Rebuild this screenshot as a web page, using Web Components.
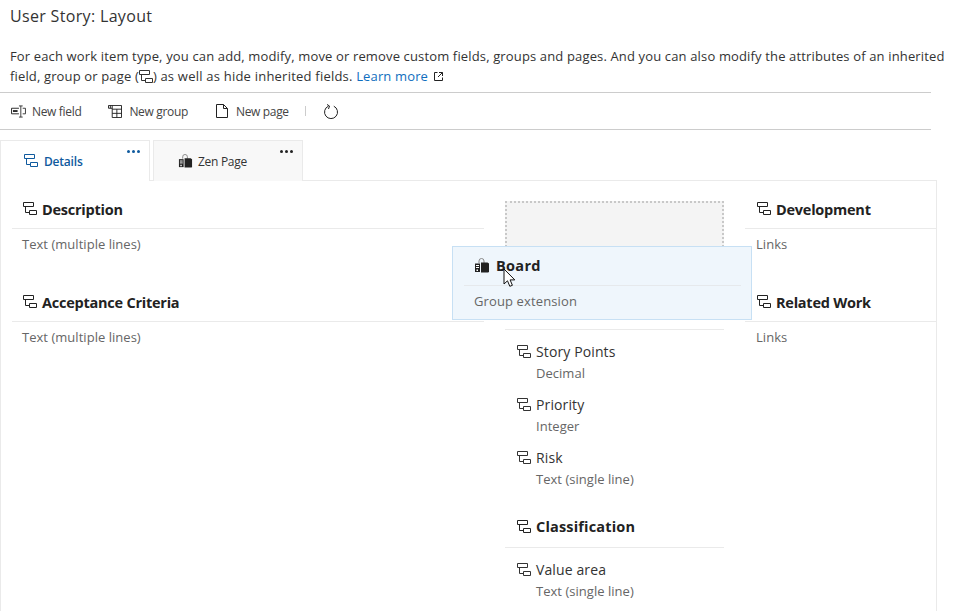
<!DOCTYPE html>
<html><head><meta charset="utf-8">
<style>
html,body{margin:0;padding:0;background:#fff;overflow:hidden;height:611px;font-family:"Open Sans","Noto Sans","Liberation Sans",sans-serif;color:#333}
</style></head><body>
<layout-page></layout-page>
<script>
const ICONS={
 group:'<svg viewBox="0 0 14 14" fill="none" stroke="currentColor" stroke-width="1"><path d="M.5 .5h10v4H.5zM6.500 8.500h7v4h-7zM2.500 4.500v6h4"/></svg>',
 bag:'<svg viewBox="0 0 16 16"><path d="M5 5V3a2.400 2.400 0 0 1 5 0v2" fill="none" stroke="#888" stroke-width="1"/><path d="M1 5.500h5V14H1z" fill="#222"/><path d="M7 4.500h6.500l1.500 1V14l-1 .5H7z" fill="#222"/><path d="M2 7.500h3M2 9.500h3" stroke="#fff" stroke-width="1"/><path d="M2.500 11.500H4v1.500H2.500z" fill="#fff"/></svg>',
 field:'<svg viewBox="0 0 16 14" fill="none" stroke="#222" stroke-width="1"><path d="M8.500 3.500H.5v6h8"/><path d="M2 5.500h5v2H2z" fill="#222" stroke="none"/><path d="M10.500 1v12M8.500 1h4M8.500 13h4M12.500 3.500h3v6h-3" stroke="#333"/></svg>',
 table:'<svg viewBox="0 0 15 14" fill="none" stroke="#222" stroke-width="1"><path d="M.5 .5h14M2.500 .5v3M4.500 .5v13h10V.5M4.500 4.500h10M4.500 9h10M9.500 4.500v9M.5 .5v3h4"/></svg>',
 page:'<svg viewBox="0 0 12 14" fill="none" stroke="#222" stroke-width="1"><path d="M.5 .5h7l4 4v9H.5zM7.500 .5v4h4"/></svg>',
 refresh:'<svg viewBox="0 0 15 15" fill="none" stroke="#222" stroke-width="1"><path d="M9.800 2.200A6.500 6.500 0 1 1 4.500 2.100"/><path d="M3 .5L5.500 2 4.500 5"/></svg>',
 ext:'<svg viewBox="0 0 9 9" fill="none" stroke="#222" stroke-width="1"><path d="M3.500 .5h-3v8h8v-3M5 .5h3.500V4M8.500 .5L4 5"/></svg>'
};
function def(name,css,html){
 customElements.define(name,class extends HTMLElement{
  connectedCallback(){
   if(this.shadowRoot)return;
   const r=this.attachShadow({mode:'open'});
   const g=n=>this.getAttribute(n)||'';
   r.innerHTML='<style>'+css+'</style>'+(typeof html==='function'?html(g):html);
  }
 });
}
def('x-icon',':host{display:inline-flex;flex:none;line-height:0}svg{width:100%;height:100%;display:block}',g=>ICONS[g('name')]);

def('x-tool',`:host{display:flex;align-items:center;gap:7px;font-size:12px;color:#444;letter-spacing:-.33px;white-space:nowrap}`,'<slot name="i"></slot><slot></slot>');

def('x-toolbar',`:host{display:flex;align-items:center;height:36px;padding-left:11px;border-top:1px solid #ccc;border-bottom:1px solid #ccc;width:920px}`,'<slot></slot>');

def('x-tab',`:host{display:flex;align-items:center;position:relative;width:150px;height:41px;box-sizing:border-box;border:1px solid #eaeaea;border-bottom:0;font-size:12px;letter-spacing:-.3px;color:#333;background:#f8f8f8;gap:5px;padding-left:24px;margin-bottom:-1px;z-index:1}
 :host([active]){background:#fff;color:#0f5a9e;font-weight:600;padding-left:23px;gap:6px;letter-spacing:-.2px}
 .more{position:absolute;top:9px;right:9px;display:flex;gap:2px}
 .more i{width:3px;height:3px;border-radius:50%;background:currentColor;display:block}
 :host(:not([active])) .more{color:#222}`,
 '<slot name="i"></slot><slot></slot><span class="more"><i></i><i></i><i></i></span>');

def('x-group-head',`:host{display:flex;align-items:center;gap:5px;height:37px;box-sizing:border-box;padding:0 0 2px var(--ind,11px);border-bottom:1px solid #eaeaea;font-size:14.500px;font-weight:700;color:#222;letter-spacing:var(--ls,-.24px);white-space:nowrap}`,
 g=>'<x-icon name="group" style="width:14px;height:14px"></x-icon><slot></slot>');

def('x-group',`:host{display:block;height:93px}
 .sub{font-size:13px;color:#666;letter-spacing:.03px;line-height:18px;padding:6px 0 0 var(--subind,10px);white-space:nowrap}`,
 g=>'<x-group-head><slot></slot></x-group-head><div class="sub">'+g('sub')+'</div>');

def('x-field',`:host{display:grid;grid-template-columns:14px auto;column-gap:5px;padding-left:12px;height:53px;align-content:start}
 x-icon{width:14px;height:14px;align-self:center}
 .n{font-size:14px;color:#333;letter-spacing:.12px;line-height:22px;white-space:nowrap}
 .t{grid-column:2;font-size:13px;color:#666;letter-spacing:.03px;line-height:20px;white-space:nowrap}`,
 g=>'<x-icon name="group"></x-icon><div class="n"><slot></slot></div><div class="t">'+g('sub')+'</div>');

def('x-drag-card',`:host{position:absolute;left:452px;top:246px;width:300px;height:74px;box-sizing:border-box;background:#eff6fc;border:1px solid #c7e0f4;padding:0 10px 0 11px;z-index:5}
 .h{display:flex;align-items:center;gap:6px;height:39px;box-sizing:border-box;padding:0 0 1px 10px;border-bottom:1px solid #e6e9ec;font-size:14.500px;font-weight:700;color:#222;letter-spacing:.3px}
 .s{padding:6px 0 0 10px;font-size:13px;color:#666;letter-spacing:.12px;line-height:18px}
 svg.c{position:absolute;left:50px;top:21px;width:14px;height:20px}`,
 g=>'<div class="h"><x-icon name="bag" style="width:16px;height:16px"></x-icon><slot></slot></div><div class="s">'+g('sub')+'</div><svg class="c" viewBox="0 0 14 20"><path d="M1 1v15l3.500-3.200 2.300 5.500 2.600-1-2.300-5.400h4.700z" fill="#fff" stroke="#111" stroke-width="1"/></svg>');

def('layout-page',`:host{display:block;position:relative;height:611px;overflow:hidden}
 h1{margin:0;font-size:16px;font-weight:400;line-height:22px;padding:5px 0 0 10px;color:#333;letter-spacing:.33px;height:20px}
 .d{margin:22px 0 0;padding-left:10px;width:953px;box-sizing:border-box;font-size:13px;line-height:19.500px;height:39px;color:#333;letter-spacing:.145px;white-space:nowrap}
 .d a{color:#106ebe;text-decoration:none}
 .d .w{letter-spacing:.22px}
 .d x-icon{width:14px;height:14px;vertical-align:-3px}
 .d x-icon.e{width:9px;height:9px;margin-left:2px;vertical-align:0}
 x-toolbar{margin-top:6px}
 x-tool:nth-of-type(1){margin-right:27px;gap:6px}
 x-tool:nth-of-type(2){margin-right:28px}
 x-tool:nth-of-type(3){margin-right:16px;gap:8px}
 .sep{width:1px;height:10px;background:#ccc;margin-right:18px}
 .tabs{display:flex;gap:3px;margin-top:10px;position:relative}
 .panel{display:grid;grid-template-columns:472px 219px 192px;column-gap:21px;box-sizing:border-box;width:937px;height:432px;border:1px solid #eaeaea;border-bottom:0;padding:11px 0 0 11px}
 .col3{--ind:12px;--subind:11px}
 .ph{height:118px;box-sizing:border-box;margin-top:9px;border:2px dotted #c8c8c8;background:#f4f4f4}
 .line{height:1px;background:#eaeaea;margin-top:10px}
 .f{padding-top:11px}
 .mid x-group-head{--ind:12px;--ls:.17px;height:40px;padding-bottom:2px;gap:5px}
 .cl{margin-top:8px}
 .fv{padding-top:11px}`,
 `<h1>User Story: Layout</h1>
 <p class="d">For each work item type, you can add, modify, move or remove custom fields, groups and pages. And you can also modify the attributes of an inherited<br>field, group or page (<x-icon name="group"></x-icon>) <span class="w">as well as hide inherited fields.</span> <a href="#">Learn more</a> <x-icon class="e" name="ext"></x-icon></p>
 <x-toolbar>
  <x-tool><x-icon slot="i" name="field" style="width:15px;height:13px"></x-icon>New field</x-tool>
  <x-tool><x-icon slot="i" name="table" style="width:14px;height:13px"></x-icon>New group</x-tool>
  <x-tool><x-icon slot="i" name="page" style="width:12px;height:14px"></x-icon>New page</x-tool>
  <span class="sep"></span>
  <x-icon name="refresh" style="width:15px;height:15px"></x-icon>
 </x-toolbar>
 <div class="tabs">
  <x-tab active><x-icon slot="i" name="group" style="width:14px;height:14px"></x-icon>Details</x-tab>
  <x-tab><x-icon slot="i" name="bag" style="width:15px;height:15px"></x-icon>Zen Page</x-tab>
 </div>
 <div class="panel">
  <div><x-group sub="Text (multiple lines)">Description</x-group><x-group sub="Text (multiple lines)">Acceptance Criteria</x-group></div>
  <div class="mid">
   <div class="ph"></div>
   <div class="line"></div>
   <div class="f">
   <x-field sub="Decimal">Story Points</x-field>
   <x-field sub="Integer">Priority</x-field>
   <x-field sub="Text (single line)">Risk</x-field>
   </div>
   <div class="cl"><x-group-head>Classification</x-group-head></div>
   <div class="fv"><x-field sub="Text (single line)">Value area</x-field></div>
  </div>
  <div class="col3"><x-group sub="Links">Development</x-group><x-group sub="Links">Related Work</x-group></div>
 </div>
 <x-drag-card sub="Group extension">Board</x-drag-card>`);
</script>
</body></html>
